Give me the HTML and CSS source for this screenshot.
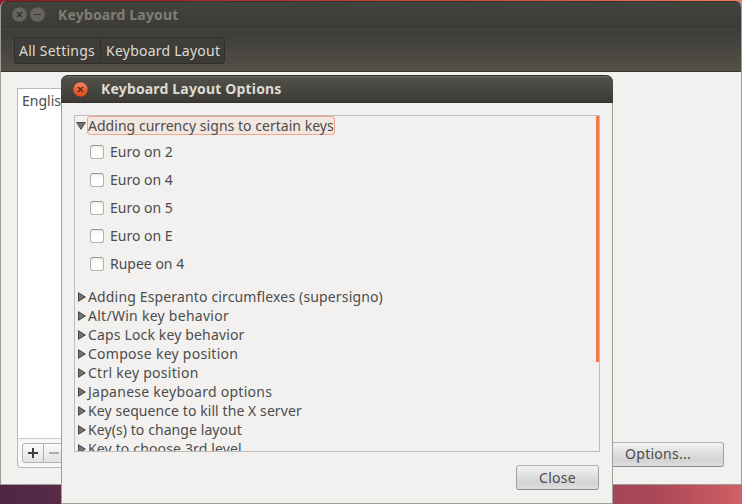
FILE: index.html
```html
<!DOCTYPE html>
<html lang="en">
<head>
<meta charset="utf-8">
<title>Keyboard Layout</title>
<link rel="stylesheet" href="styles.css">
</head>
<body>
<div class="desktop">
  <main class="window">
    <header class="titlebar titlebar-inactive">
      <svg class="control" width="15" height="15" viewBox="0 0 15 15"><circle cx="7.5" cy="7.5" r="7.3" fill="#66645d"/><path d="M5 5l5 5M10 5l-5 5" stroke="#33322e" stroke-width="1.3"/></svg>
      <svg class="control" width="15" height="15" viewBox="0 0 15 15"><circle cx="7.5" cy="7.5" r="7.3" fill="#66645d"/><path d="M4 7.5h7" stroke="#33322e"/></svg>
      <h1 class="title">Keyboard Layout</h1>
    </header>
    <nav class="toolbar">
      <div class="crumbs"><span class="crumb crumb-first">All Settings</span><span class="crumb">Keyboard Layout</span></div>
    </nav>
    <section class="content">
      <div class="layouts">
        <div class="layout-list">English (US)</div>
        <div class="list-tools">
          <span class="tool"><svg width="11" height="11" viewBox="0 0 11 11"><path d="M5 0v10M0 5h10" stroke="#3c3c3a" stroke-width="2"/></svg></span><span class="tool"><svg width="11" height="11" viewBox="0 0 11 11"><path d="M0 5h10" stroke="#9c9a96" stroke-width="1.6"/></svg></span>
        </div>
      </div>
      <div class="button button-options">Options...</div>
    </section>
  </main>

  <section class="dialog">
    <header class="titlebar titlebar-active">
      <svg class="control" width="16" height="16" viewBox="0 0 16 16"><defs><linearGradient id="g" x2="0" y2="1"><stop stop-color="#f68b69"/><stop offset=".5" stop-color="#ea6337"/><stop offset="1" stop-color="#e04a18"/></linearGradient></defs><circle cx="7.5" cy="8.5" r="7.5" fill="url(#g)" stroke="#32302c" stroke-width=".5"/><path d="M5 6l5 5M10 6l-5 5" stroke="#43291f" stroke-width="1.2"/></svg>
      <h2 class="title">Keyboard Layout Options</h2>
    </header>
    <div class="dialog-body">
      <div class="options">
        <div class="tree">
          <div class="row row-open"><svg class="arrow-down" width="10" height="8" viewBox="0 0 10 8"><path d="M.7 .5h8.6L5 7.3z"/></svg><span class="label focused">Adding currency signs to certain keys</span></div>
          <div class="checks">
            <div class="check"><i class="box"></i><span class="check-label">Euro on 2</span></div>
            <div class="check"><i class="box"></i><span class="check-label">Euro on 4</span></div>
            <div class="check"><i class="box"></i><span class="check-label">Euro on 5</span></div>
            <div class="check"><i class="box"></i><span class="check-label">Euro on E</span></div>
            <div class="check"><i class="box"></i><span class="check-label">Rupee on 4</span></div>
          </div>
          <div class="row"><svg class="arrow" width="8" height="10" viewBox="0 0 8 10"><path d="M.5 .7v8.6L7.3 5z"/></svg><span class="label medium">Adding Esperanto circumflexes (supersigno)</span></div>
          <div class="row"><svg class="arrow" width="8" height="10" viewBox="0 0 8 10"><path d="M.5 .7v8.6L7.3 5z"/></svg><span class="label wide">Alt/Win key behavior</span></div>
          <div class="row"><svg class="arrow" width="8" height="10" viewBox="0 0 8 10"><path d="M.5 .7v8.6L7.3 5z"/></svg><span class="label medium">Caps Lock key behavior</span></div>
          <div class="row"><svg class="arrow" width="8" height="10" viewBox="0 0 8 10"><path d="M.5 .7v8.6L7.3 5z"/></svg><span class="label wide">Compose key position</span></div>
          <div class="row"><svg class="arrow" width="8" height="10" viewBox="0 0 8 10"><path d="M.5 .7v8.6L7.3 5z"/></svg><span class="label wide">Ctrl key position</span></div>
          <div class="row"><svg class="arrow" width="8" height="10" viewBox="0 0 8 10"><path d="M.5 .7v8.6L7.3 5z"/></svg><span class="label wide">Japanese keyboard options</span></div>
          <div class="row"><svg class="arrow" width="8" height="10" viewBox="0 0 8 10"><path d="M.5 .7v8.6L7.3 5z"/></svg><span class="label narrow">Key sequence to kill the X server</span></div>
          <div class="row"><svg class="arrow" width="8" height="10" viewBox="0 0 8 10"><path d="M.5 .7v8.6L7.3 5z"/></svg><span class="label narrow">Key(s) to change layout</span></div>
          <div class="row"><svg class="arrow" width="8" height="10" viewBox="0 0 8 10"><path d="M.5 .7v8.6L7.3 5z"/></svg><span class="label medium">Key to choose 3rd level</span></div>
        </div>
        <div class="scrollbar"></div>
      </div>
      <div class="actions"><div class="button button-close">Close</div></div>
    </div>
  </section>
</div>
</body>
</html>
```
FILE: styles.css
```css
* { box-sizing: border-box; }
body { margin: 0; }
.desktop {
  position: relative;
  width: 742px;
  height: 504px;
  padding-top: 1px;
  overflow: hidden;
  background: linear-gradient(90deg, #8e1b24, #b52a2a 30%, #d9513f 70%, #f47b60) 0 0 / 100% 60px no-repeat,
    linear-gradient(90deg, #4f2742, #6b3354 25%, #8b3f5b 65%, #ab4757 88%, #cf6065);
  font: 14px/19px "Noto Sans", "Open Sans", sans-serif;
  color: #4c4c4c;
  white-space: nowrap;
}
.window {
  display: flex;
  flex-direction: column;
  height: 484px;
  border: 1px solid #9e9b95;
  border-top: 0;
  border-radius: 6px 6px 0 0;
  overflow: hidden;
  background: #f2f1f0;
}
.titlebar { display: flex; align-items: center; flex: none; }
.titlebar-inactive {
  height: 29px;
  padding: 0 0 2px 11px;
  gap: 3px;
  background: linear-gradient(#43433e, #3c3b37);
  border-top: 1px solid #34332f;
  border-bottom: 1px solid #45443f;
  color: #807d74;
}
.control { flex: none; }
.title { margin: 0; font-size: 14px; line-height: 20px; font-weight: 700; letter-spacing: .17px; }
.titlebar-inactive .title { margin-left: 10px; }
.toolbar {
  flex: none;
  height: 42px;
  padding: 7px 0 0 13px;
  background: linear-gradient(#3d3c38, #545048);
  border-bottom: 1px solid #383631;
}
.crumbs {
  display: flex;
  width: 211px;
  height: 27px;
  border: 1px solid #2f2e2a;
  border-radius: 3px;
  background: linear-gradient(#403f3b, #3b3a35);
  color: #dfdbd2;
  letter-spacing: .24px;
}
.crumb { padding: 3px 0 0 4px; }
.crumb-first { width: 86px; border-right: 1px solid #302f2b; }
.crumb + .crumb { padding-left: 5px; }
.content {
  flex: 1;
  display: flex;
  justify-content: space-between;
  align-items: flex-end;
  padding: 16px 17px 17px 16px;
}
.layouts {
  width: 220px;
  height: 380px;
  border: 1px solid #bcb9b4;
  border-radius: 0 0 3px 3px;
  background: #f8f7f6;
}
.layout-list {
  height: 350px;
  padding: 2px 4px;
  border-bottom: 1px solid #cfccc8;
  background: #fff;
}
.list-tools { display: flex; padding: 4px 4px; }
.tool {
  display: grid;
  place-items: center;
  width: 22px;
  height: 20px;
  border: 1px solid #b5b2ad;
  border-radius: 3px 0 0 3px;
  background: linear-gradient(#fafafa, #e3e2e1);
}
.tool + .tool { border-left: 0; border-radius: 0; }
.button {
  display: flex;
  align-items: center;
  justify-content: center;
  border: 1px solid #a3a19d;
  border-top-color: #b5b3b0;
  border-bottom-color: #8c8a87;
  border-radius: 3px;
  background: linear-gradient(#f3f3f3, #dcdcdc 50%, #d3d3d3 75%, #e1e1e1);
  letter-spacing: .25px;
}
.button-options { width: 131px; height: 25px; padding: 0 1px 2px 0; margin-bottom: 1px; }
.dialog {
  position: absolute;
  left: 61px;
  top: 75px;
  width: 552px;
  height: 429px;
  border: 1px solid #a29f99;
  border-top: 0;
  border-radius: 7px 7px 0 0;
  background: #f2f1f0;
}
.titlebar-active {
  height: 28px;
  margin: 0 -1px;
  padding-left: 12px;
  border: solid #32312d;
  border-width: 1px 0;
  border-radius: 7px 7px 0 0;
  background: linear-gradient(#66645c 1px, #504f48 2px, #3c3b37);
  color: #dfdbd2;
}
.titlebar-active .title { margin-left: 12px; }
.dialog-body { padding: 12px 13px 0 12px; }
.options {
  display: flex;
  justify-content: space-between;
  width: 526px;
  height: 337px;
  border: 1px solid #bfbdba;
  overflow: hidden;
}
.tree { padding-left: 1px; }
.row { display: flex; align-items: center; height: 19px; padding-left: 2px; }
.row-open { padding-left: 0; }
.arrow, .arrow-down { fill: #737371; stroke: #464645; stroke-width: 1; }
.arrow { margin-right: 2px; }
.arrow-down { margin-right: 1px; }
.focused {
  width: 248px;
  height: 19px;
  line-height: 17px;
  border: 1px solid #f0a78a;
  border-radius: 3px;
  background: #f2e6e0;
  letter-spacing: .03px;
}
.narrow { letter-spacing: .08px; }
.medium { letter-spacing: .15px; }
.wide { letter-spacing: .27px; }
.checks { padding: 3px 0 9px 14px; }
.check { display: flex; align-items: center; gap: 6px; height: 28px; }
.check-label { padding-bottom: 2px; }
.box {
  width: 14px;
  height: 14px;
  border: 1px solid #b3afaa;
  border-top-color: #98948e;
  border-radius: 3px;
  background: linear-gradient(#eeeeed, #fff 40%);
}
.scrollbar { width: 3px; height: 246px; background: #f47b4b; }
.actions { display: flex; justify-content: flex-end; padding-top: 13px; }
.button-close { width: 83px; height: 25px; }
```
